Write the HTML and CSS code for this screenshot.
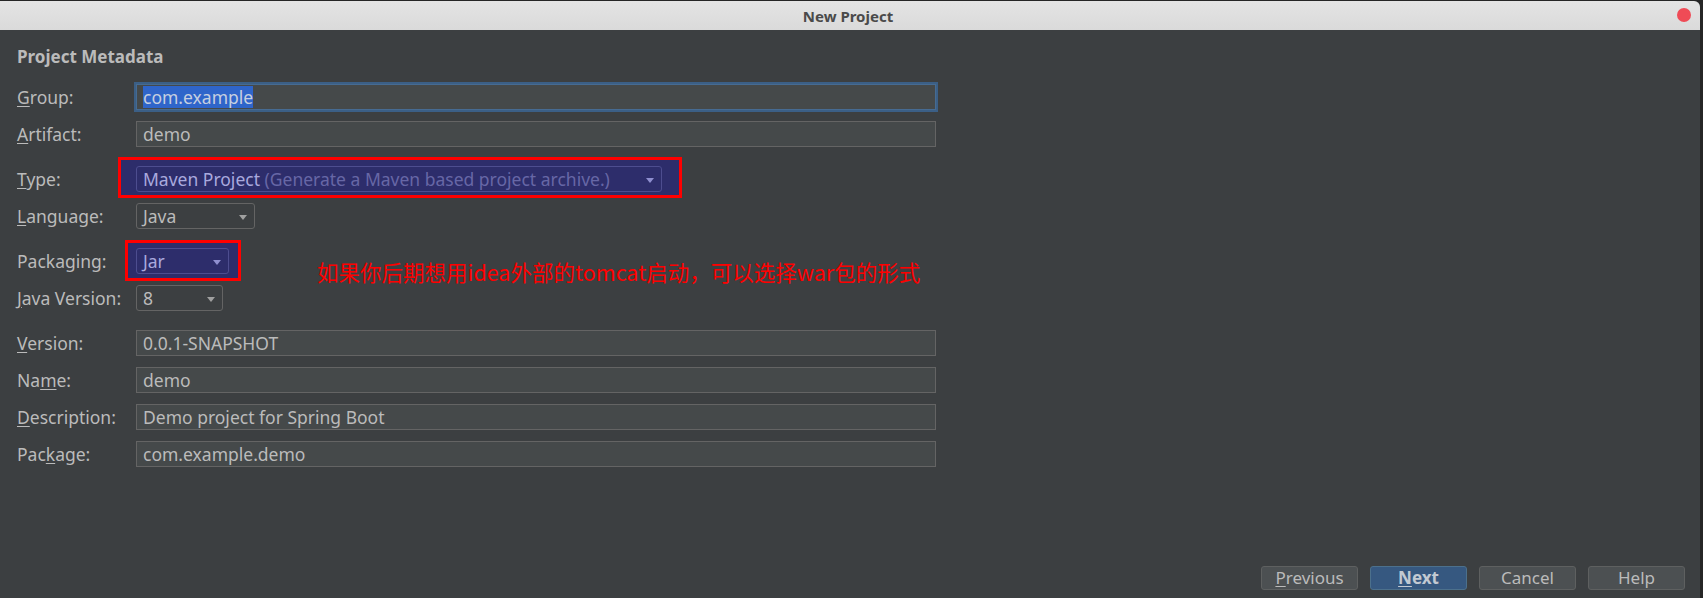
FILE: index.html
```html
<!DOCTYPE html>
<html>
<head>
<meta charset="utf-8">
<title>New Project</title>
<link rel="stylesheet" href="styles.css">
</head>
<body>
<div class="window">
  <div class="titlebar">
    <span class="title">New Project</span>
    <span class="close"></span>
  </div>
  <div class="content">
    <div class="section-title">Project Metadata</div>
    <div class="form">
      <div class="row">
        <div class="lbl"><u>G</u>roup:</div>
        <div class="field focused"><span class="sel">com.example</span></div>
      </div>
      <div class="row">
        <div class="lbl"><u>A</u>rtifact:</div>
        <div class="field">demo</div>
      </div>
      <div class="row sep">
        <div class="lbl"><u>T</u>ype:</div>
        <div class="annot annot-type">
          <div class="combo hl combo-type"><span class="main">Maven Project</span>&nbsp;<span class="dim">(Generate a Maven based project archive.)</span><span class="arrow"></span></div>
        </div>
      </div>
      <div class="row">
        <div class="lbl"><u>L</u>anguage:</div>
        <div class="combo combo-lang">Java<span class="arrow"></span></div>
      </div>
      <div class="row sep">
        <div class="lbl">Packaging:</div>
        <div class="annot annot-pack">
          <div class="combo hl combo-pack"><span class="main">Jar</span><span class="arrow"></span></div>
        </div>
        <div class="note">如果你后期想用idea外部的tomcat启动，可以选择war包的形式</div>
      </div>
      <div class="row">
        <div class="lbl"><u>J</u>ava Version:</div>
        <div class="combo combo-java">8<span class="arrow"></span></div>
      </div>
      <div class="row sep">
        <div class="lbl"><u>V</u>ersion:</div>
        <div class="field">0.0.1-SNAPSHOT</div>
      </div>
      <div class="row">
        <div class="lbl">Na<u>m</u>e:</div>
        <div class="field">demo</div>
      </div>
      <div class="row">
        <div class="lbl"><u>D</u>escription:</div>
        <div class="field">Demo project for Spring Boot</div>
      </div>
      <div class="row">
        <div class="lbl">Pac<u>k</u>age:</div>
        <div class="field">com.example.demo</div>
      </div>
    </div>
    <div class="buttons">
      <div class="btn"><u>P</u>revious</div>
      <div class="btn primary"><u>N</u>ext</div>
      <div class="btn">Cancel</div>
      <div class="btn">Help</div>
    </div>
  </div>
</div>
</body>
</html>
```

FILE: styles.css
```css
* { box-sizing: border-box; }
html, body {
  margin: 0;
  padding: 0;
  width: 1703px;
  height: 598px;
  overflow: hidden;
  background: #262626;
  font-family: "Noto Sans", "Open Sans", sans-serif;
}
.window {
  width: 1700px;
  height: 597px;
  margin-top: 1px;
  background: #3c3f41;
  border-top-right-radius: 6px;
  display: flex;
  flex-direction: column;
  overflow: hidden;
}
.titlebar {
  height: 29px;
  flex: none;
  background: linear-gradient(#e4e4e4, #dadada);
  display: flex;
  align-items: center;
  justify-content: center;
  position: relative;
}
.title {
  font-size: 15px;
  font-weight: bold;
  color: #4a4a4a;
  margin-left: -4px;
}
.close {
  position: absolute;
  right: 9px;
  top: 7px;
  width: 14px;
  height: 14px;
  border-radius: 50%;
  background: #ef4b56;
}
.content {
  flex: 1;
  display: flex;
  flex-direction: column;
  padding: 16px 15px 8px 17px;
}
.section-title {
  font-size: 17px;
  font-weight: bold;
  color: #bbbbbb;
  line-height: 22px;
  height: 22px;
}
.form {
  margin-top: 16px;
  display: flex;
  flex-direction: column;
  gap: 11px;
}
.row {
  display: flex;
  align-items: flex-start;
  height: 26px;
}
.row.sep { margin-top: 8px; }
.lbl {
  width: 119px;
  flex: none;
  font-size: 17.5px;
  line-height: 26px;
  color: #bbbbbb;
  white-space: nowrap;
}
.lbl u, .btn u { text-underline-offset: 2px; }
.field {
  width: 800px;
  height: 26px;
  background: #45494a;
  border: 1px solid #646464;
  color: #bbbbbb;
  font-size: 17.5px;
  line-height: 24px;
  padding-left: 6px;
  white-space: nowrap;
}
.field.focused {
  border-color: #466b92;
  box-shadow: 0 0 0 2px #3b5f86;
}
.sel {
  display: inline-block;
  background: #2f65ca;
  color: #c6cfe0;
  line-height: 22px;
  height: 22px;
  margin-top: 1px;
  vertical-align: top;
}
.combo {
  position: relative;
  height: 26px;
  border: 1px solid #646464;
  border-radius: 3px;
  background: #3c3f41;
  color: #bbbbbb;
  font-size: 17.5px;
  line-height: 24px;
  padding-left: 6px;
  white-space: nowrap;
}
.arrow {
  position: absolute;
  right: 7px;
  top: 11px;
  width: 0;
  height: 0;
  border-left: 4px solid transparent;
  border-right: 4px solid transparent;
  border-top: 5px solid #a0a0a0;
}
.combo-type { width: 526px; }
.combo-lang { width: 119px; }
.combo-pack { width: 93px; }
.combo-java { width: 87px; }
.annot {
  position: relative;
  isolation: isolate;
}
.annot::before {
  content: "";
  position: absolute;
  border: 3px solid #ff0000;
  background: #2d2d6b;
  z-index: -1;
}
.annot-type::before { top: -9px; bottom: -6px; left: -18px; right: -20px; }
.annot-pack::before { top: -8px; bottom: -7px; left: -11px; right: -12px; }
.combo.hl {
  background: transparent;
  border-color: #4d4d8f;
}
.combo.hl .main { color: #a9a9de; }
.combo.hl .dim { color: #6767a6; }
.combo.hl .arrow { border-top-color: #8f8fd0; }
.note {
  margin-left: 88px;
  margin-top: 12px;
  font-family: "Noto Sans CJK SC", "Noto Sans", sans-serif;
  font-size: 21.5px;
  line-height: 24px;
  color: #ff0000;
  white-space: nowrap;
}
.buttons {
  margin-top: auto;
  display: flex;
  justify-content: flex-end;
  gap: 12px;
}
.btn {
  width: 97px;
  height: 24px;
  border: 1px solid #5e6060;
  border-radius: 3px;
  background: #4c5052;
  color: #bbbbbb;
  font-size: 17px;
  line-height: 22px;
  text-align: center;
}
.btn.primary {
  background: #365880;
  border-color: #4c708c;
  font-weight: bold;
  color: #c2c9d2;
}
```
